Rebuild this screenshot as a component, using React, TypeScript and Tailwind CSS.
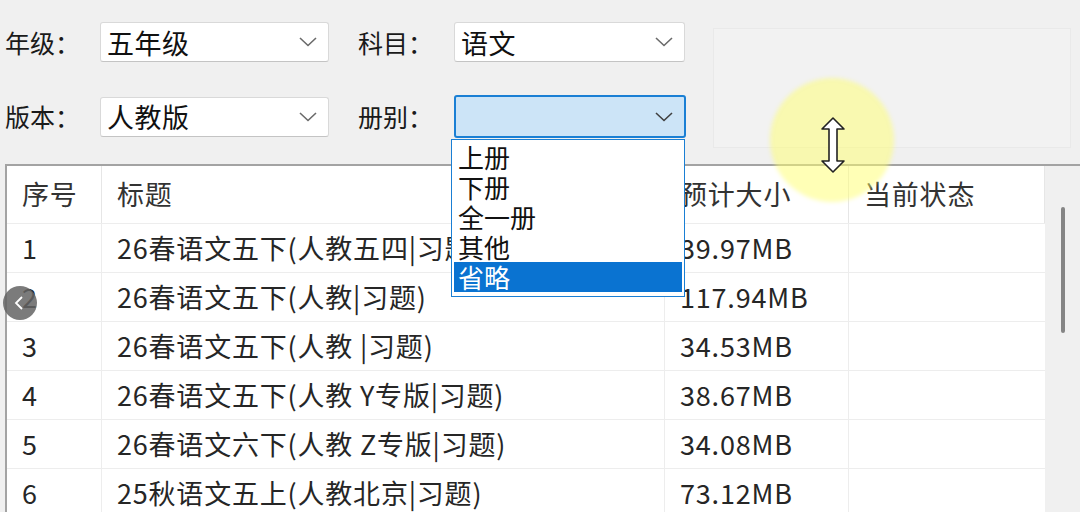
import React from "react";

const font = { fontFamily: '"Noto Sans CJK SC", "Noto Sans", sans-serif' };

function Chevron({ dark }: { dark?: boolean }) {
  return (
    <svg width="18" height="10" viewBox="0 0 18 10" className="shrink-0">
      <polyline
        points="1,1 9,8.5 17,1"
        fill="none"
        stroke={dark ? "#404040" : "#6a6a6a"}
        strokeWidth="1.6"
      />
    </svg>
  );
}

function Combo({ value, width, active }: { value: string; width: string; active?: boolean }) {
  return (
    <div
      className={
        "flex items-center justify-between pl-[6px] pr-[11px] rounded-[3px] " +
        width +
        (active
          ? " h-[43px] bg-[#cce4f7] border-2 border-[#1a7fd4]"
          : " h-[40px] bg-white border border-[#d9d9d9] border-b-[#c4c4c4]")
      }
    >
      <span className="text-[27px] leading-none text-[#111] tracking-[0.5px]">{value}</span>
      <Chevron dark={active} />
    </div>
  );
}

function Label({ text, width }: { text: string; width: string }) {
  return <div className={"text-[25px] leading-none text-[#1a1a1a] " + width}>{text}</div>;
}

const rows = [
  ["1", "26春语文五下(人教五四|习题)", "39.97MB"],
  ["2", "26春语文五下(人教|习题)", "117.94MB"],
  ["3", "26春语文五下(人教 |习题)", "34.53MB"],
  ["4", "26春语文五下(人教 Y专版|习题)", "38.67MB"],
  ["5", "26春语文六下(人教 Z专版|习题)", "34.08MB"],
  ["6", "25秋语文五上(人教北京|习题)", "73.12MB"],
];

const cols = "grid grid-cols-[95px_563px_184px_196px]";

export default function App() {
  return (
    <div className="relative w-[1080px] h-[512px] overflow-hidden bg-[#f0f0f0]" style={font}>
      {/* filters */}
      <div className="flex h-[148px] pt-[22px]">
        <div className="flex flex-col gap-[33px]">
          <div className="flex items-center">
            <Label text="年级：" width="w-[100px] pl-[5px]" />
            <Combo value="五年级" width="w-[229px]" />
            <Label text="科目：" width="w-[125px] pl-[29px]" />
            <Combo value="语文" width="w-[231px]" />
          </div>
          <div className="flex items-center">
            <Label text="版本：" width="w-[100px] pl-[5px]" />
            <Combo value="人教版" width="w-[229px]" />
            <Label text="册别：" width="w-[125px] pl-[29px]" />
            <Combo value="" width="w-[232px]" active />
          </div>
        </div>
        <div className="ml-[27px] mt-[6px] w-[358px] h-[120px] border border-[#e9e9e9] bg-[#f2f2f2]" />
      </div>

      {/* table */}
      <div className="mt-[16px] ml-[5px] flex border-t-2 border-l-2 border-[#a3a3a3]">
        <div className="w-[1038px] bg-white text-[27px] tracking-[0.8px] text-[#262626]">
          <div className={cols + " h-[57px] items-center"}>
            {["序号", "标题", "预计大小", "当前状态"].map((h) => (
              <div key={h} className="h-full flex items-center px-[15px] border-r border-[#e6e6e6] text-[#333]">
                {h}
              </div>
            ))}
          </div>
          {rows.map((r) => (
            <div key={r[0]} className={cols + " h-[49px] border-t border-[#ededed]"}>
              <div className="flex items-center px-[15px] border-r border-[#ededed]">{r[0]}</div>
              <div className="flex items-center px-[15px] border-r border-[#ededed] whitespace-nowrap">{r[1]}</div>
              <div className="flex items-center px-[15px] border-r border-[#ededed]">{r[2]}</div>
              <div className="flex items-center px-[15px]" />
            </div>
          ))}
        </div>
        <div className="flex-1 pl-[16px] pt-[41px]">
          <div className="w-[4px] h-[126px] rounded-full bg-[#858585]" />
        </div>
      </div>

      {/* open dropdown list */}
      <div className="absolute left-[451px] top-[139px] w-[234px] h-[158px] bg-white border border-[#1a7fd4] p-[2px] text-[26px] leading-[30px] text-[#111]">
        <div className="pl-[4px]">上册</div>
        <div className="pl-[4px]">下册</div>
        <div className="pl-[4px]">全一册</div>
        <div className="pl-[4px]">其他</div>
        <div className="pl-[4px] bg-[#0a73d1] text-white">省略</div>
      </div>

      {/* cursor highlight */}
      <div className="absolute left-[770px] top-[78px] w-[124px] h-[124px] rounded-full bg-[rgba(255,255,110,0.5)] blur-[2px]" />
      <svg className="absolute left-[820px] top-[116px]" width="26" height="58" viewBox="0 0 26 58">
        <path
          d="M13 2 L24 13 L17 13 L17 45 L24 45 L13 56 L2 45 L9 45 L9 13 L2 13 Z"
          fill="white"
          stroke="#222"
          strokeWidth="1.6"
          strokeLinejoin="round"
        />
      </svg>

      {/* overlay nav button */}
      <div className="absolute left-[3px] top-[286px] w-[34px] h-[34px] rounded-full bg-[rgba(100,100,100,0.85)] flex items-center justify-center">
        <svg width="14" height="16" viewBox="0 0 14 16">
          <polyline points="9,2 3,8 9,14" fill="none" stroke="white" strokeWidth="1.8" />
        </svg>
      </div>
    </div>
  );
}
